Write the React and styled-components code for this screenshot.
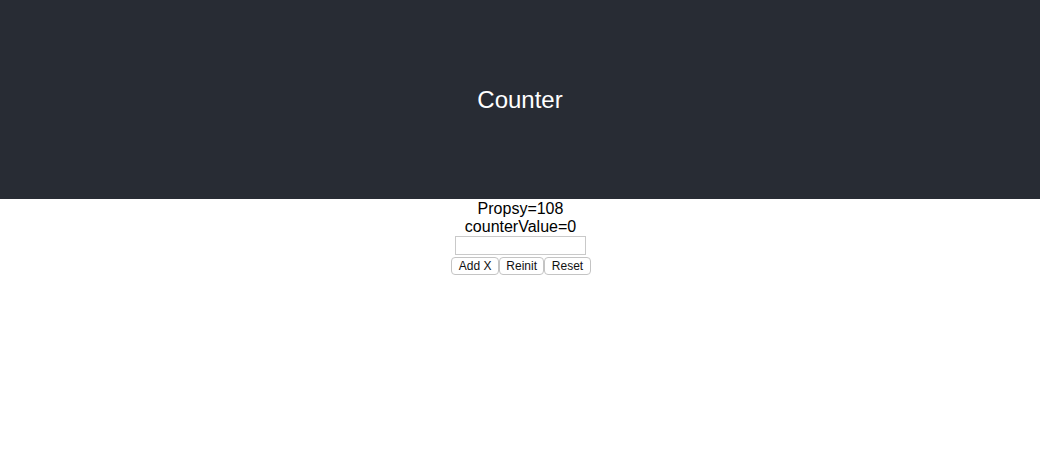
import React from "react";
import styled, { createGlobalStyle } from "styled-components";

const Global = createGlobalStyle`
  html, body { margin: 0; padding: 0; background: #fff; }
  body { font-family: "Liberation Sans", Arial, sans-serif; color: #000; }
`;

const Header = styled.header`
  height: 199px;
  background: #282c34;
  display: flex;
  align-items: center;
  justify-content: center;
  color: #fff;
  font-size: 24px;
`;

const Body = styled.main`
  display: flex;
  flex-direction: column;
  align-items: center;
  font-size: 16px;
  line-height: 18px;
  padding-top: 1px;
`;

const Line = styled.div`
  text-align: center;
  padding-left: 1px;
`;

const Input = styled.input`
  box-sizing: border-box;
  width: 131px;
  height: 19px;
  margin-top: 0;
  border: 1px solid #c9c9c9;
  border-radius: 0;
  padding: 1px 2px;
  font: 13px "Liberation Sans", Arial, sans-serif;
  outline: none;
`;

const Buttons = styled.div`
  display: flex;
  margin-top: 2px;
  padding-left: 2px;
`;

const Button = styled.button`
  box-sizing: border-box;
  height: 18px;
  padding: 0 6.4px;
  background: #fff;
  border: 1px solid #c4c4c4;
  border-radius: 4px;
  font: 12px "Liberation Sans", Arial, sans-serif;
  color: #111;
  line-height: 14px;
`;

export default function App() {
  return (
    <>
      <Global />
      <Header>Counter</Header>
      <Body>
        <Line>Propsy=108</Line>
        <Line>counterValue=0</Line>
        <Input type="text" />
        <Buttons>
          <Button>Add X</Button>
          <Button>Reinit</Button>
          <Button>Reset</Button>
        </Buttons>
      </Body>
    </>
  );
}
